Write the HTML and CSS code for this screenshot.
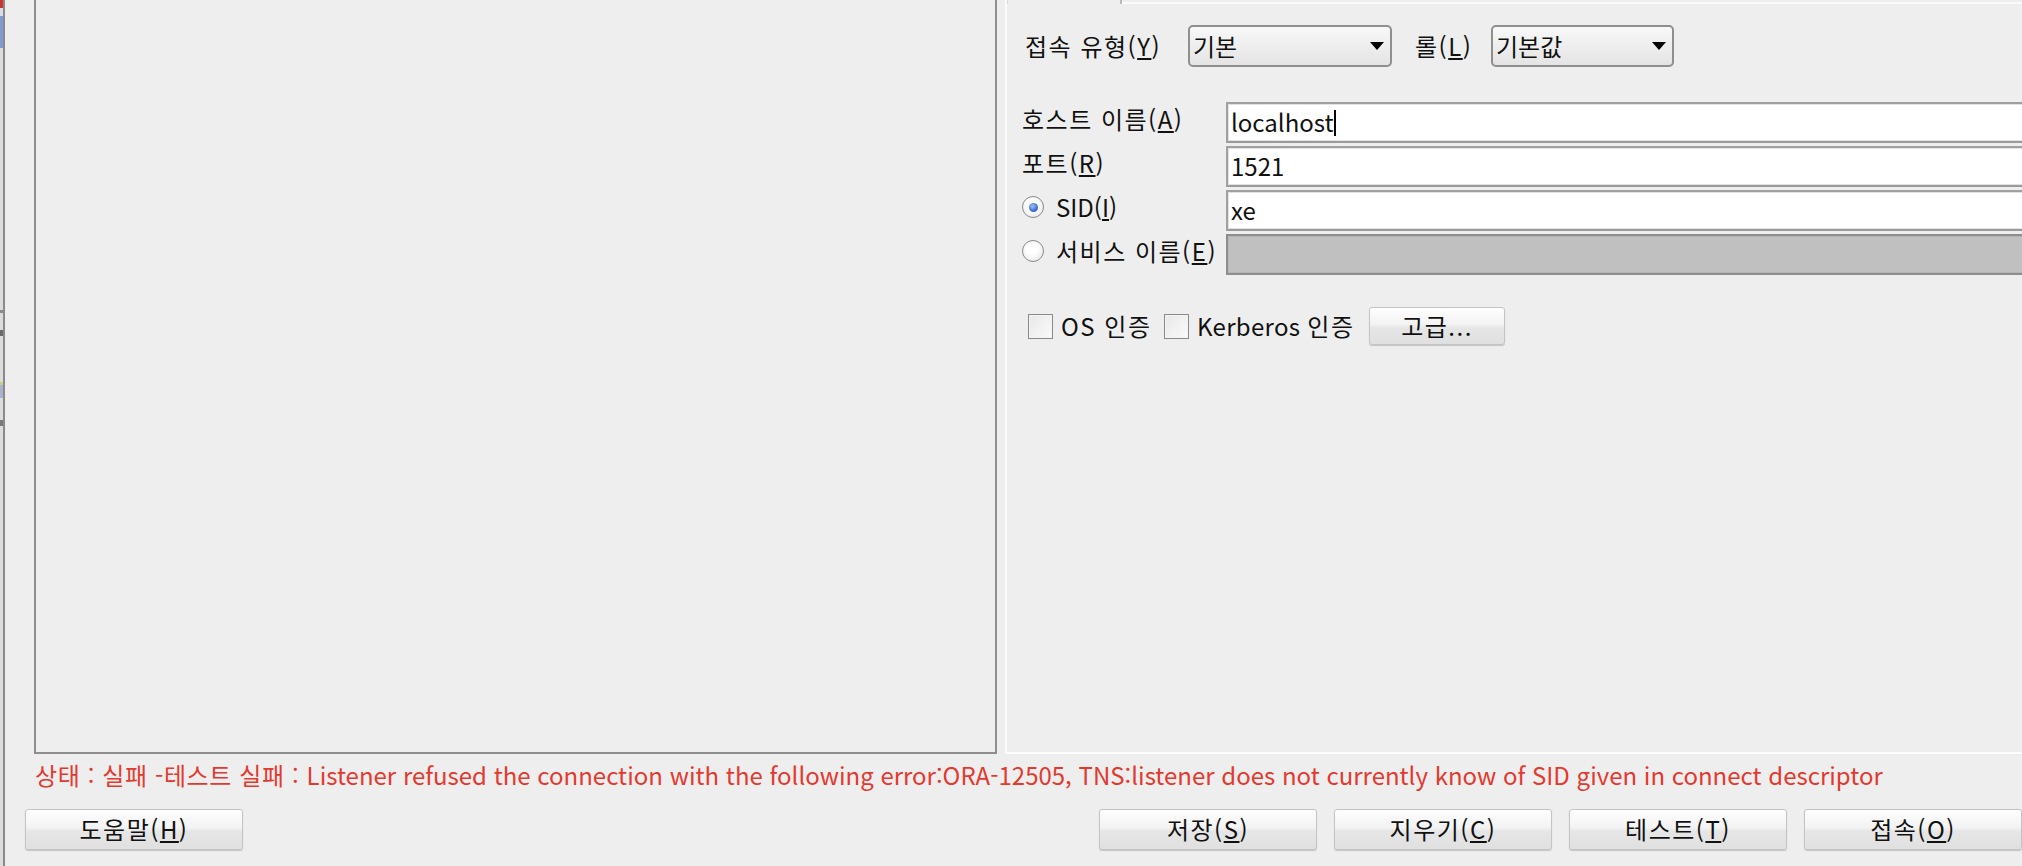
FILE: index.html
```
<!DOCTYPE html>
<html lang="ko">
<head>
<meta charset="utf-8">
<title>접속</title>
<link rel="stylesheet" href="styles.css">
</head>
<body>
<div class="window">
  <div class="edge"></div>
  <div class="main">
    <div class="panes">
      <div class="left-pane"></div>
      <div class="right-pane">
        <div class="tabstrip"><div class="tab"></div><div class="tab-rest"></div></div>
        <div class="form">
          <div class="type-row">
            <span class="lbl-type ko">접속 유형(<u>Y</u>)</span>
            <div class="combo combo-type"><span class="val">기본</span><span class="arrow"></span></div>
            <span class="lbl-role ko">롤(<u>L</u>)</span>
            <div class="combo combo-role"><span class="val">기본값</span><span class="arrow"></span></div>
          </div>
          <div class="fields">
            <span class="lbl ko">호스트 이름(<u>A</u>)</span>
            <div class="field">localhost<span class="caret"></span></div>
            <span class="lbl ko">포트(<u>R</u>)</span>
            <div class="field">1521</div>
            <span class="lbl"><span class="radio on"></span>SID(<u>I</u>)</span>
            <div class="field">xe</div>
            <span class="lbl ko"><span class="radio"></span>서비스 이름(<u>E</u>)</span>
            <div class="field disabled"></div>
          </div>
          <div class="checks">
            <span class="check"></span><span class="check-lbl ko">OS 인증</span>
            <span class="check check2"></span><span class="check-lbl check-lbl2">Kerberos <span class="ko">인증</span></span>
            <div class="btn btn-adv ko">고급...</div>
          </div>
        </div>
      </div>
    </div>
    <div class="status"><span class="status-ko">상태 : 실패 -테스트 실패 : </span>Listener refused the connection with the following error:ORA-12505, TNS:listener does not currently know of SID given in connect descriptor</div>
    <div class="buttons">
      <div class="btn btn-wide ko">도움말(<u>H</u>)</div>
      <div class="btn-group">
        <div class="btn btn-wide ko">저장(<u>S</u>)</div>
        <div class="btn btn-wide ko">지우기(<u>C</u>)</div>
        <div class="btn btn-wide ko">테스트(<u>T</u>)</div>
        <div class="btn btn-wide ko">접속(<u>O</u>)</div>
      </div>
    </div>
  </div>
</div>
</body>
</html>
```

FILE: styles.css
```
* { box-sizing: border-box; }
html, body { margin: 0; padding: 0; }
body {
  width: 2022px;
  height: 866px;
  overflow: hidden;
  background: #eeeeee;
  font-family: "Noto Sans CJK KR", "Noto Sans", sans-serif;
  font-size: 24px;
  line-height: 1.2;
  color: #111;
}
u { text-underline-offset: 2px; }
.ko { letter-spacing: 1.5px; }

.window { display: flex; height: 866px; }
.edge {
  width: 5px;
  flex: none;
  border-right: 2px solid #8a8a8a;
  background: linear-gradient(to bottom,
    #c8372e 0 8px, #d9dde6 8px 16px, #7f9bd6 16px 48px, #dcdcdc 48px 310px,
    #8a8a8a 310px 313px, #dcdcdc 313px 330px, #6a6a6a 330px 336px, #dcdcdc 336px 382px,
    #c9cf86 382px 385px, #aeb0d0 385px 398px, #dcdcdc 398px 420px, #7a7a7a 420px 426px, #dcdcdc 426px);
}
.main {
  flex: 1;
  min-width: 0;
  padding-left: 20px;
  display: flex;
  flex-direction: column;
}
.panes {
  display: flex;
  gap: 8px;
  height: 754px;
  margin-left: 9px;
  flex: none;
}
.left-pane {
  width: 963px;
  flex: none;
  border: 2px solid #8e8e8e;
  border-top: none;
  background: #eeeeee;
}
.right-pane {
  flex: 1;
  min-width: 0;
  display: flex;
  flex-direction: column;
  border-left: 2px solid #fbfbfb;
  border-bottom: 2px solid #fdfdfd;
  overflow: hidden;
}
.tabstrip { display: flex; height: 4px; flex: none; }
.tab { width: 115px; border-right: 2px solid #b9b9b9; border-left: 1px solid #d8d8d8; }
.tab-rest { flex: 1; border-bottom: 2px solid #fbfbfb; }

.form { padding: 21px 0 0 15px; }

.type-row { display: flex; align-items: center; height: 42px; gap: 21px; }
.lbl-type { width: 142px; margin-left: 3px; white-space: nowrap; }
.lbl-role { width: 55px; margin-left: 2px; white-space: nowrap; }
.combo {
  height: 42px;
  border: 2px solid #8f8f8f;
  border-radius: 5px;
  background: linear-gradient(#f8f8f8, #ececec 60%, #e4e4e4);
  display: flex;
  align-items: center;
  padding: 0 6px 0 3px;
}
.combo-type { width: 204px; }
.combo-role { width: 183px; }
.combo .val { flex: 1; }
.arrow {
  width: 0; height: 0;
  border-left: 7px solid transparent;
  border-right: 7px solid transparent;
  border-top: 8px solid #000;
}

.fields {
  display: grid;
  grid-template-columns: 204px 1fr;
  grid-auto-rows: 41px;
  row-gap: 3px;
  margin-top: 35px;
  margin-right: -20px;
}
.lbl {
  align-self: center;
  margin-bottom: 6px;
  display: flex;
  align-items: center;
  white-space: nowrap;
}
.field {
  border: 2px solid #a0a0a0;
  border-bottom-color: #9a9a9a;
  background: #fff;
  padding-left: 3px;
  display: flex;
  align-items: center;
  box-shadow: inset 0 0 0 1px #e2e2e2;
}
.field.disabled { background: #c0c0c0; border-color: #8e8e8e; box-shadow: inset 0 0 0 1px #b5b5b5; }
.caret { display: inline-block; width: 2px; height: 26px; background: #000; }

.radio {
  width: 22px; height: 22px;
  border-radius: 50%;
  border: 1px solid #8a8a8a;
  background: radial-gradient(circle at 45% 40%, #ffffff 30%, #e2e2e2 100%);
  margin-right: 12px;
  display: flex;
  align-items: center;
  justify-content: center;
  flex: none;
}
.radio.on::after {
  content: "";
  width: 9px; height: 9px;
  border-radius: 50%;
  background: radial-gradient(circle at 40% 35%, #9cc0f5, #2f63c8 70%);
}

.checks {
  display: flex;
  align-items: center;
  height: 38px;
  margin-top: 32px;
}
.check {
  width: 25px; height: 25px;
  border: 1px solid #8a8a8a;
  background: linear-gradient(135deg, #e8e8e8, #fafafa);
  box-shadow: inset 0 0 0 1px #f4f4f4;
  margin-left: 6px;
  margin-right: 8px;
  flex: none;
}
.check2 { margin-left: 0; }
.check-lbl { white-space: nowrap; width: 103px; }
.check-lbl2 { width: 172px; letter-spacing: 0.3px; }
.btn {
  height: 41px;
  border: 1px solid #c4c4c4;
  border-radius: 3px;
  background: linear-gradient(#fefefe, #f3f3f3 45%, #e6e6e6 55%, #e0e0e0);
  box-shadow: 0 1px 1px rgba(0, 0, 0, 0.18);
  display: flex;
  align-items: center;
  justify-content: center;
  white-space: nowrap;
  flex: none;
}
.btn-adv { width: 136px; height: 38px; }

.status {
  height: 41px;
  line-height: 41px;
  padding-left: 10px;
  color: #e4392f;
  white-space: nowrap;
  flex: none;
}
.status-ko { letter-spacing: 0.6px; }
.buttons {
  display: flex;
  justify-content: space-between;
  margin-top: 14px;
  flex: none;
}
.btn-group { display: flex; gap: 17px; }
.btn-wide { width: 218px; }
```
